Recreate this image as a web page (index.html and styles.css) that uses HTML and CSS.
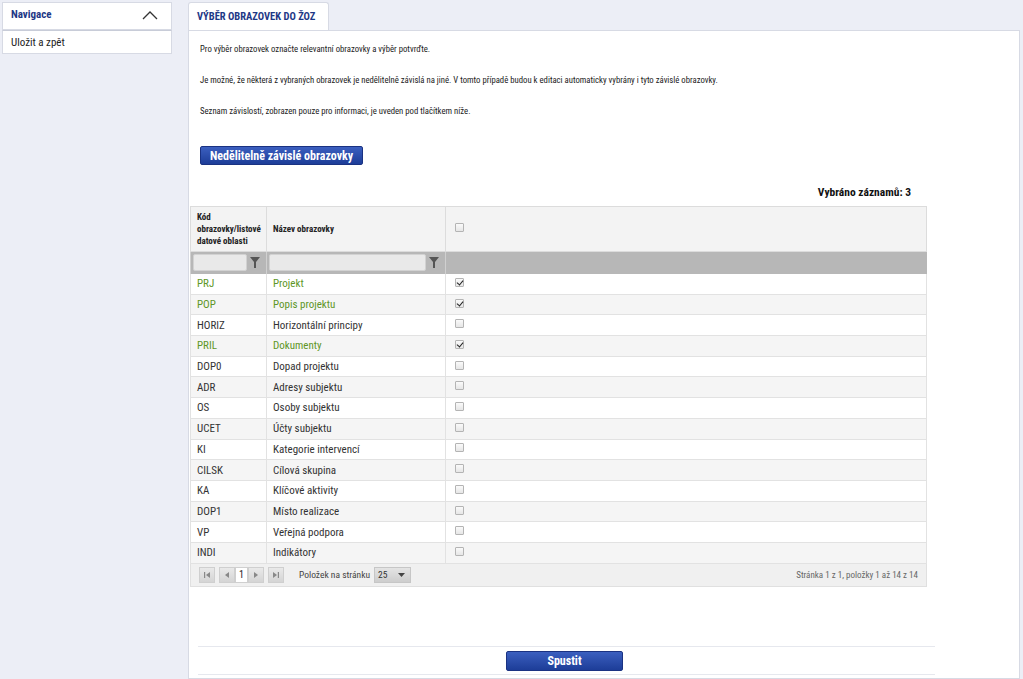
FILE: index.html
```html
<!DOCTYPE html>
<html lang="cs">
<head>
<meta charset="utf-8">
<title>Výběr obrazovek do ŽOZ</title>
<link rel="stylesheet" href="styles.css">
</head>
<body>
<div class="layout">
  <aside class="nav">
    <div class="nav-head">
      <span class="nav-title">Navigace</span>
      <svg class="chev" width="16" height="10" viewBox="0 0 16 10"><polyline points="1,9 8,2 15,9" fill="none" stroke="#333" stroke-width="1.3"/></svg>
    </div>
    <div class="nav-item">Uložit a zpět</div>
  </aside>
  <main class="main">
    <div class="tabs"><div class="tab">VÝBĚR OBRAZOVEK DO ŽOZ</div></div>
    <section class="panel">
      <div class="intro">
        <p>Pro výběr obrazovek označte relevantní obrazovky a výběr potvrďte.</p>
        <p>Je možné, že některá z vybraných obrazovek je nedělitelně závislá na jiné. V tomto případě budou k editaci automaticky vybrány i tyto závislé obrazovky.</p>
        <p>Seznam závislostí, zobrazen pouze pro informaci, je uveden pod tlačítkem níže.</p>
        <button class="btn btn-dep">Nedělitelně závislé obrazovky</button>
      </div>
      <div class="count">Vybráno záznamů: 3</div>
      <table class="grid">
        <colgroup><col class="c1"><col class="c2"><col class="c3"></colgroup>
        <thead>
          <tr class="hdr">
            <th>Kód obrazovky/listové datové oblasti</th>
            <th>Název obrazovky</th>
            <th><span class="cb"></span></th>
          </tr>
          <tr class="filter">
            <td><div class="f"><span class="finput"></span><svg class="funnel" width="10" height="11" viewBox="0 0 10 11"><path d="M0 0H10L6 5V11H4V5Z" fill="#555"/></svg></div></td>
            <td><div class="f"><span class="finput"></span><svg class="funnel" width="10" height="11" viewBox="0 0 10 11"><path d="M0 0H10L6 5V11H4V5Z" fill="#555"/></svg></div></td>
            <td></td>
          </tr>
        </thead>
        <tbody>
          <tr class="sel"><td>PRJ</td><td>Projekt</td><td><span class="cb on"></span></td></tr>
          <tr class="sel"><td>POP</td><td>Popis projektu</td><td><span class="cb on"></span></td></tr>
          <tr><td>HORIZ</td><td>Horizontální principy</td><td><span class="cb"></span></td></tr>
          <tr class="sel"><td>PRIL</td><td>Dokumenty</td><td><span class="cb on"></span></td></tr>
          <tr><td>DOP0</td><td>Dopad projektu</td><td><span class="cb"></span></td></tr>
          <tr><td>ADR</td><td>Adresy subjektu</td><td><span class="cb"></span></td></tr>
          <tr><td>OS</td><td>Osoby subjektu</td><td><span class="cb"></span></td></tr>
          <tr><td>UCET</td><td>Účty subjektu</td><td><span class="cb"></span></td></tr>
          <tr><td>KI</td><td>Kategorie intervencí</td><td><span class="cb"></span></td></tr>
          <tr><td>CILSK</td><td>Cílová skupina</td><td><span class="cb"></span></td></tr>
          <tr><td>KA</td><td>Klíčové aktivity</td><td><span class="cb"></span></td></tr>
          <tr><td>DOP1</td><td>Místo realizace</td><td><span class="cb"></span></td></tr>
          <tr><td>VP</td><td>Veřejná podpora</td><td><span class="cb"></span></td></tr>
          <tr><td>INDI</td><td>Indikátory</td><td><span class="cb"></span></td></tr>
        </tbody>
        <tfoot>
          <tr class="pager">
            <td colspan="3">
              <div class="pg">
                <div class="pg-left">
                  <span class="pbtn"><svg width="8" height="8" viewBox="0 0 8 8"><rect x="1" y="1" width="1.2" height="6" fill="#888"/><path d="M7 1V7L3 4Z" fill="#888"/></svg></span>
                  <span class="pbtn gap"><svg width="8" height="8" viewBox="0 0 8 8"><path d="M6 1V7L2 4Z" fill="#888"/></svg></span>
                  <span class="pnum">1</span>
                  <span class="pbtn"><svg width="8" height="8" viewBox="0 0 8 8"><path d="M2 1V7L6 4Z" fill="#888"/></svg></span>
                  <span class="pbtn gap"><svg width="8" height="8" viewBox="0 0 8 8"><path d="M1 1V7L5 4Z" fill="#888"/><rect x="5.8" y="1" width="1.2" height="6" fill="#888"/></svg></span>
                  <span class="plabel">Položek na stránku</span>
                  <span class="psel">25 <svg width="7" height="4" viewBox="0 0 7 4"><path d="M0 0H7L3.5 4Z" fill="#444"/></svg></span>
                </div>
                <div class="pg-right">Stránka 1 z 1, položky 1 až 14 z 14</div>
              </div>
            </td>
          </tr>
        </tfoot>
      </table>
      <div class="actions">
        <button class="btn btn-run">Spustit</button>
      </div>
    </section>
  </main>
</div>
</body>
</html>
```
FILE: styles.css
```css
* { box-sizing: border-box; }
html, body { margin: 0; height: 100%; overflow: hidden; }
body {
  background: #eceef6;
  font-family: "Roboto Condensed", "Liberation Sans Narrow", "DejaVu Sans Condensed", "Liberation Sans", sans-serif;
  color: #333;
  padding: 2px 3px 0 2px;
}
.layout { display: flex; gap: 16px; height: 100%; }
.nav { width: 170px; flex: none; }
.nav-head {
  height: 28px; background: #fff; border: 1px solid #d7dae4;
  display: flex; align-items: center; justify-content: space-between;
  padding: 0 13px 3px 8px;
}
.nav-title { font-weight: bold; font-size: 11px; color: #1e3886; }
.nav-item {
  height: 24px; background: #fff; border: 1px solid #d7dae4; border-top: 1px solid #c8ccd8;
  font-size: 11px; color: #222; padding: 0 8px; display: flex; align-items: center;
}
.main { flex: 1; display: flex; flex-direction: column; min-width: 0; }
.tabs { display: flex; height: 28px; }
.tab {
  width: 141px; background: #fff; border: 1px solid #d7dae4; border-bottom: none;
  border-radius: 3px 3px 0 0;
  font-size: 10.5px; font-weight: bold; color: #1e3886; padding: 0 8px;
  display: flex; align-items: center; white-space: nowrap;
}
.panel {
  flex: 1; background: #fff; border: 1px solid #d7dae4;
  padding: 0 92px 0 1px;
}
.intro { padding: 12px 0 0 10px; }
.intro p { margin: 0 0 18px; font-size: 8.7px; line-height: 13px; color: #222; }
.btn {
  font-family: inherit; color: #fff; font-weight: bold; font-size: 12px;
  background: linear-gradient(#3b5fbf, #1d3d98);
  border: 1px solid #1a3282; border-radius: 2px; cursor: pointer; white-space: nowrap;
}
.btn-dep { height: 19px; padding: 0 9px; margin-top: 10px; }
.count { text-align: right; font-weight: bold; font-size: 11.5px; color: #111; margin: 20px 16px 0 0; line-height: 14px; }
.grid {
  margin-top: 7px; width: 737px; border-collapse: collapse; table-layout: fixed;
  font-size: 11px;
}
.c1 { width: 76px; }
.c2 { width: 179px; }
.grid td, .grid th { padding: 0 6px; text-align: left; }
.hdr th {
  height: 45px; background: #f3f3f3; font-size: 9px; font-weight: bold; color: #222;
  line-height: 12px; border: 1px solid #dcdcdc; vertical-align: middle;
}
.hdr th:first-child { padding-right: 2px; }
.hdr th:last-child { padding-left: 9px; }
.filter td { height: 22px; background: #b7b7b7; padding: 0 2px; border-left: 1px solid #d0d0d0; }
.f { display: flex; align-items: center; gap: 3px; }
.finput { flex: 1; height: 17px; background: #e9e9e9; border: 1px solid #d2d2d2; border-radius: 2px; }
.funnel { flex: none; margin-right: 4px; }
tbody td { height: 20.7px; border-bottom: 1px solid #e2e2e2; border-left: 1px solid #e2e2e2; color: #333; }
tbody td:last-child { border-right: 1px solid #e2e2e2; padding-left: 9px; }
tbody tr:nth-child(even) td { background: #f5f5f5; }
tbody tr.sel td { color: #5e9626; }
.cb {
  display: inline-block; width: 9px; height: 9px; border: 1px solid #b4b4b4; border-radius: 1px;
  background: linear-gradient(#fafafa, #e6e6e6); vertical-align: middle; position: relative; top: -2px;
}
.cb.on::after {
  content: ""; position: absolute; left: 2px; top: 0px; width: 3px; height: 5px;
  border: solid #222; border-width: 0 1.5px 1.5px 0; transform: rotate(40deg);
}
.pager td { height: 23px; background: #f0f0f0; border: 1px solid #e0e0e0; padding: 0 8px 0 8px; }
.pg { display: flex; justify-content: space-between; align-items: center; font-size: 9px; color: #555; }
.pg-left { display: flex; align-items: center; }
.pbtn {
  width: 16px; height: 16px; background: linear-gradient(#e9e9e9, #d4d4d4); border: 1px solid #cfcfcf;
  display: inline-flex; align-items: center; justify-content: center;
}
.pbtn.gap { margin-left: 4px; }
.pnum {
  width: 13px; height: 16px; background: #fff; border: 1px solid #cfcfcf; font-size: 10px; color: #222;
  display: inline-flex; align-items: center; justify-content: center;
}
.plabel { margin-left: 15px; font-size: 9.5px; color: #444; }
.psel {
  margin-left: 4px; width: 37px; height: 16px; background: linear-gradient(#e4e4e4, #cdcdcd); border: 1px solid #c6c6c6;
  display: inline-flex; align-items: center; justify-content: space-between; padding: 0 5px 0 3px; font-size: 9.5px; color: #333;
}
.pg-right { color: #666; }
.actions {
  margin: 59px 0 0 8px; width: 737px; border-top: 1px solid #e6e8ee; border-bottom: 1px solid #e6e8ee;
  display: flex; justify-content: center; padding: 4px 0 3px;
}
.btn-run { width: 117px; height: 20px; margin-left: -4px; }
```
